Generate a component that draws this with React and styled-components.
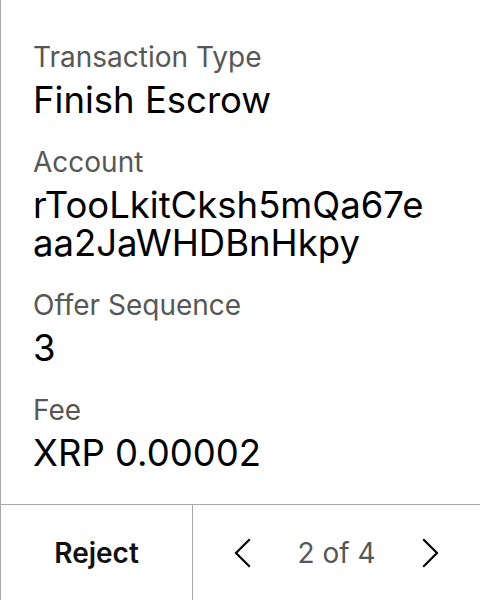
import React from "react";
import styled, { createGlobalStyle } from "styled-components";

const Global = createGlobalStyle`
  html, body { margin: 0; padding: 0; background: #fff; }
  body { font-family: Inter, "Noto Sans", sans-serif; }
  * { box-sizing: border-box; }
`;

const Screen = styled.div`
  width: 480px;
  height: 600px;
  display: flex;
  flex-direction: column;
  border-left: 1px solid #a8a8a8;
  background: #fff;
`;

const Details = styled.div`
  flex: 1;
  display: flex;
  flex-direction: column;
  gap: 26px;
  padding: 40px 49px 0 32px;
`;

const Field = styled.div`
  display: flex;
  flex-direction: column;
  gap: 7px;
`;

const Label = styled.div`
  font-size: 28px;
  line-height: 34px;
  color: #575757;
`;

const Value = styled.div`
  font-size: 36.5px;
  line-height: 38px;
  color: #000;
  word-break: break-all;
`;

const Footer = styled.div`
  height: 96px;
  display: grid;
  grid-template-columns: 192px 1fr;
  border-top: 1px solid #a8a8a8;
`;

const RejectButton = styled.button`
  border: 0;
  border-right: 1px solid #a8a8a8;
  background: none;
  font-family: inherit;
  font-size: 28px;
  font-weight: 600;
  color: #111;
  display: flex;
  align-items: center;
  justify-content: center;
  padding: 0;
`;

const Pager = styled.div`
  display: flex;
  align-items: center;
  justify-content: center;
  gap: 46px;
`;

const NavButton = styled.button`
  border: 0;
  background: none;
  padding: 0;
  display: flex;
  align-items: center;
  justify-content: center;
`;

const PageText = styled.span`
  font-size: 28px;
  color: #575757;
`;

const Chevron = ({ dir }) => (
  <svg width="18" height="30" viewBox="0 0 18 30" fill="none">
    <path
      d={dir === "left" ? "M16 2 L3 15 L16 28" : "M2 2 L15 15 L2 28"}
      stroke="#000"
      strokeWidth="2.2"
      strokeLinecap="square"
    />
  </svg>
);

const fields = [
  { label: "Transaction Type", value: "Finish Escrow" },
  { label: "Account", value: "rTooLkitCksh5mQa67eaa2JaWHDBnHkpy" },
  { label: "Offer Sequence", value: "3" },
  { label: "Fee", value: "XRP 0.00002" },
];

export default function App() {
  return (
    <>
      <Global />
      <Screen>
        <Details>
          {fields.map((f) => (
            <Field key={f.label}>
              <Label>{f.label}</Label>
              <Value>{f.value}</Value>
            </Field>
          ))}
        </Details>
        <Footer>
          <RejectButton>Reject</RejectButton>
          <Pager>
            <NavButton aria-label="Previous"><Chevron dir="left" /></NavButton>
            <PageText>2 of 4</PageText>
            <NavButton aria-label="Next"><Chevron dir="right" /></NavButton>
          </Pager>
        </Footer>
      </Screen>
    </>
  );
}
